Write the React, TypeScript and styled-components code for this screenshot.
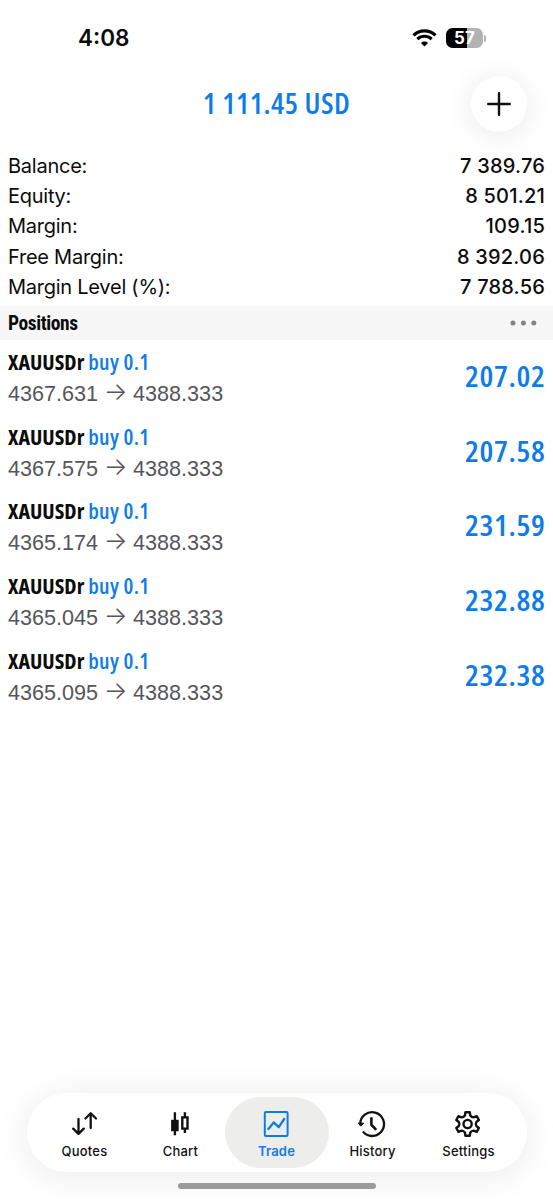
import React from "react";
import styled, { createGlobalStyle } from "styled-components";

const BLUE = "#0d7ce9";

const GlobalStyle = createGlobalStyle`
  * { box-sizing: border-box; }
  body { margin: 0; background: #fff; }
`;

const Screen = styled.div`
  width: 553px;
  height: 1200px;
  display: flex;
  flex-direction: column;
  overflow: hidden;
  background: #fff;
  color: #0c0c0c;
  font-family: Inter, "Liberation Sans", sans-serif;
`;

const StatusBar = styled.header`
  height: 76px;
  padding: 0 67px 0 78px;
  display: flex;
  align-items: center;
  justify-content: space-between;
`;

const Clock = styled.span`
  font-size: 22.5px;
  font-weight: 580;
  line-height: 30px;
`;

const StatusIcons = styled.div`
  display: flex;
  align-items: center;
  gap: 9px;
`;

const BatteryBox = styled.div`
  display: flex;
  align-items: center;
  gap: 1px;
`;

const BatteryBody = styled.div`
  width: 37px;
  height: 20px;
  border-radius: 6.5px;
  background: linear-gradient(90deg, #000 57%, #b2b2b2 57%);
  color: #fff;
  font-size: 17px;
  font-weight: 700;
  line-height: 20px;
  text-align: center;
`;

const BatteryCap = styled.div`
  width: 2px;
  height: 7px;
  border-radius: 0 2px 2px 0;
  background: #b2b2b2;
`;

const TitleBar = styled.div`
  height: 75px;
  padding: 0 26px 0 82px;
  display: flex;
  align-items: flex-start;
`;

const Total = styled.h1`
  flex: 1;
  margin: 0;
  color: ${BLUE};
  font-family: "Open Sans", sans-serif;
  font-size: 28px;
  font-weight: 600;
  font-stretch: 75%;
  line-height: 54px;
  letter-spacing: 0.5px;
  text-align: center;
  transform: scaleX(1.055);
`;

const AddButton = styled.button`
  width: 56px;
  height: 56px;
  padding: 0;
  border: 0;
  border-radius: 50%;
  background: #fff;
  box-shadow: 0 3px 30px rgba(0, 0, 0, 0.09);
  display: grid;
  place-items: center;
`;

const Summary = styled.dl`
  margin: 0;
  padding: 0 8px;
  height: 155px;
`;

const SummaryRow = styled.div`
  height: 30.2px;
  display: flex;
  align-items: center;
  justify-content: space-between;
`;

const Label = styled.dt`
  font-size: 20px;
  letter-spacing: -0.25px;
`;

const Value = styled.dd`
  margin: 0;
  font-size: 20px;
  font-weight: 460;
  letter-spacing: 0.2px;
`;

const SectionHeader = styled.div`
  height: 34px;
  padding: 0 16px 0 8px;
  display: flex;
  align-items: center;
  justify-content: space-between;
  background: #f7f7f7;
`;

const SectionTitle = styled.h2`
  margin: 0;
  padding-top: 2px;
  font-family: Roboto, sans-serif;
  font-size: 19.5px;
  font-weight: 700;
  font-stretch: 75%;
  line-height: 34px;
  letter-spacing: -0.42px;
`;

const List = styled.ul`
  flex: 1;
  margin: 0;
  padding: 0;
  list-style: none;
`;

const Position = styled.li`
  height: 74.7px;
  padding: 0 8px;
  display: flex;
  justify-content: space-between;
`;

const Symbol = styled.div`
  height: 38px;
  font-family: "Open Sans", sans-serif;
  font-size: 22px;
  font-weight: 700;
  font-stretch: 75%;
  line-height: 43px;
`;

const Side = styled.span`
  color: ${BLUE};
  font-weight: 600;
  letter-spacing: 0.35px;
`;

const Prices = styled.div`
  display: flex;
  align-items: center;
  color: #55565a;
  font-family: "Liberation Sans", sans-serif;
  font-size: 21.6px;
  line-height: 31px;
`;

const Arrow = styled.span`
  width: 35px;
  padding-bottom: 4px;
  font-family: Inter, sans-serif;
  font-size: 25px;
  font-weight: 300;
  line-height: 27px;
  text-align: center;
`;

const Profit = styled.div`
  color: ${BLUE};
  font-family: "Open Sans", sans-serif;
  font-size: 29px;
  font-weight: 600;
  font-stretch: 75%;
  line-height: 72px;
  letter-spacing: 0.6px;
  transform: scaleX(1.065);
  transform-origin: right center;
`;

const Footer = styled.footer`
  height: 107px;
  display: flex;
  flex-direction: column;
  align-items: center;
`;

const TabBar = styled.nav`
  width: 500px;
  height: 79px;
  padding: 4px 6px;
  border-radius: 40px;
  background: #fff;
  box-shadow: 0 4px 36px rgba(0, 0, 0, 0.085);
  display: flex;
  justify-content: space-between;
`;

const Tab = styled.button<{ $active?: boolean }>`
  width: 104px;
  height: 71px;
  margin-right: -8px;
  padding: 13px 2px 0 0;
  border: 0;
  border-radius: 36px;
  background: ${(p) => (p.$active ? "#ededec" : "transparent")};
  color: ${(p) => (p.$active ? BLUE : "#111")};
  display: flex;
  flex-direction: column;
  align-items: center;
  gap: 3px;
  font-family: Inter, sans-serif;
  font-size: 13px;
  font-weight: ${(p) => (p.$active ? 600 : 500)};
  line-height: 20px;
  letter-spacing: 0.2px;
  &:last-child { margin-right: 0; }
`;

const TabName = styled.span`
  padding-left: 2px;
`;

const HomeIndicator = styled.div`
  width: 198px;
  height: 6px;
  margin-top: 11px;
  border-radius: 3px;
  background: #9b9b9b;
`;

const WifiIcon = () => (
  <svg width="25" height="18" viewBox="0 0 25 18" fill="none" stroke="#000">
    <path d="M1.5 6.3a15.8 15.8 0 0 1 22 0" strokeWidth="3.2" />
    <path d="M5.3 10.2a10.4 10.4 0 0 1 14.4 0" strokeWidth="3" />
    <path d="M12.5 17.6 8.9 14a5.2 5.2 0 0 1 7.2 0Z" fill="#000" stroke="none" />
  </svg>
);

const PlusIcon = () => (
  <svg width="24" height="24" viewBox="0 0 24 24" stroke="#111" strokeWidth="2.4" strokeLinecap="round">
    <path d="M12 1.2v21.6M1.2 12h21.6" />
  </svg>
);

const DotsIcon = () => (
  <svg width="27" height="6" viewBox="0 0 27 6" fill="#858585">
    <circle cx="3" cy="3" r="2.5" />
    <circle cx="13.4" cy="3" r="2.5" />
    <circle cx="23.8" cy="3" r="2.5" />
  </svg>
);

const iconProps = {
  width: 28,
  height: 28,
  viewBox: "0 0 28 28",
  fill: "none",
  stroke: "currentColor",
  strokeWidth: 2,
  strokeLinecap: "round" as const,
  strokeLinejoin: "round" as const,
};

const QuotesIcon = () => (
  <svg {...iconProps} strokeWidth="2.3">
    <path d="M8.5 9v14.3M3.2 18.6l5.3 5.3 5.3-5.3M20.7 18V3.6M15.4 8.5l5.3-5.3L26 8.5" />
  </svg>
);

const ChartIcon = () => (
  <svg {...iconProps} strokeLinecap="butt" strokeLinejoin="miter">
    <path d="M8.9 2.3v23M18.9 2.3v5M18.9 18.5v4.5" strokeWidth="2.4" />
    <path d="M5.1 9.8h7.6v11.4H5.1z" fill="currentColor" stroke="none" />
    <path d="M16.3 7.4h5.2v11.2h-5.2z" strokeWidth="2.4" />
  </svg>
);

const TradeIcon = () => (
  <svg {...iconProps}>
    <rect x="2.8" y="2" width="22.8" height="24" rx="1" />
    <path d="m6.4 19 5.3-6.6 5 4.8L22.2 9" strokeWidth="2.3" />
  </svg>
);

const HistoryIcon = () => (
  <svg {...iconProps} strokeWidth="2.3">
    <path d="M2.2 14.2A11.9 11.9 0 1 1 5.5 22.3" />
    <path d="M0.5 13.2h5.4l-2.8 2.7z" fill="currentColor" strokeWidth="1" />
    <path d="M13.4 8.4v6.4l4.1 4.2" strokeWidth="2.6" />
  </svg>
);

const gearPath = Array.from({ length: 6 }, (_, i) => {
  const at = (deg: number, r: number) => {
    const a = ((i * 60 + deg - 90) * Math.PI) / 180;
    return `${(13.6 + r * Math.cos(a)).toFixed(2)} ${(14 + r * Math.sin(a)).toFixed(2)}`;
  };
  return `${i ? "L" : "M"}${at(-17, 9)}L${at(-10.5, 12)}L${at(10.5, 12)}L${at(17, 9)}Q${at(30, 7.6)} ${at(43, 9)}`;
}).join("") + "Z";

const SettingsIcon = () => (
  <svg {...iconProps} strokeWidth="2.4">
    <path d={gearPath} />
    <circle cx="13.6" cy="14" r="4.1" />
  </svg>
);

const summary = [
  ["Balance:", "7 389.76"],
  ["Equity:", "8 501.21"],
  ["Margin:", "109.15"],
  ["Free Margin:", "8 392.06"],
  ["Margin Level (%):", "7 788.56"],
];

const positions = [
  ["4367.631", "207.02"],
  ["4367.575", "207.58"],
  ["4365.174", "231.59"],
  ["4365.045", "232.88"],
  ["4365.095", "232.38"],
];

const tabs = [
  { name: "Quotes", Icon: QuotesIcon },
  { name: "Chart", Icon: ChartIcon },
  { name: "Trade", Icon: TradeIcon },
  { name: "History", Icon: HistoryIcon },
  { name: "Settings", Icon: SettingsIcon },
];

export default function App() {
  return (
    <Screen>
      <GlobalStyle />
      <StatusBar>
        <Clock>4:08</Clock>
        <StatusIcons>
          <WifiIcon />
          <BatteryBox>
            <BatteryBody>57</BatteryBody>
            <BatteryCap />
          </BatteryBox>
        </StatusIcons>
      </StatusBar>
      <TitleBar>
        <Total>1 111.45 USD</Total>
        <AddButton aria-label="New order">
          <PlusIcon />
        </AddButton>
      </TitleBar>
      <Summary>
        {summary.map(([label, value]) => (
          <SummaryRow key={label}>
            <Label>{label}</Label>
            <Value>{value}</Value>
          </SummaryRow>
        ))}
      </Summary>
      <SectionHeader>
        <SectionTitle>Positions</SectionTitle>
        <DotsIcon />
      </SectionHeader>
      <List>
        {positions.map(([open, profit]) => (
          <Position key={open}>
            <div>
              <Symbol>
                XAUUSDr <Side>buy 0.1</Side>
              </Symbol>
              <Prices>
                {open}
                <Arrow>→</Arrow>
                4388.333
              </Prices>
            </div>
            <Profit>{profit}</Profit>
          </Position>
        ))}
      </List>
      <Footer>
        <TabBar>
          {tabs.map(({ name, Icon }) => (
            <Tab key={name} $active={name === "Trade"}>
              <Icon />
              <TabName>{name}</TabName>
            </Tab>
          ))}
        </TabBar>
        <HomeIndicator />
      </Footer>
    </Screen>
  );
}
